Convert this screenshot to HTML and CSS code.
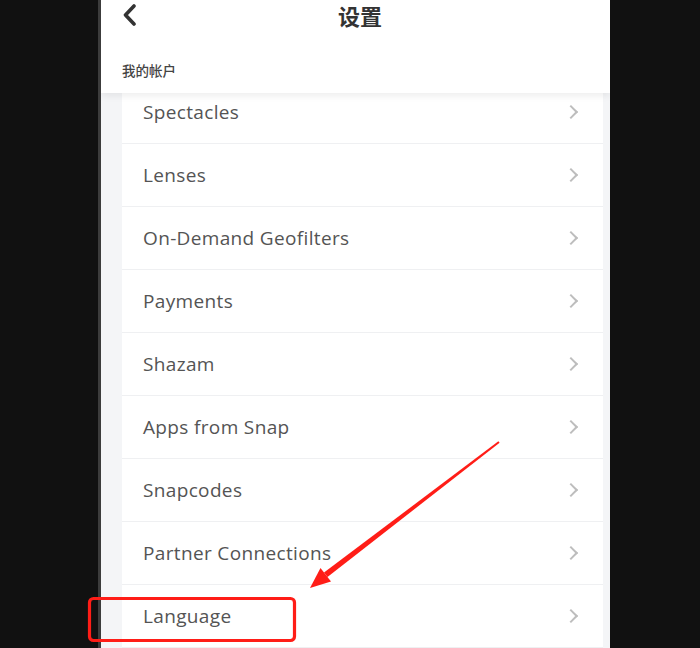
FILE: index.html
```html
<!DOCTYPE html>
<html lang="zh-CN">

<head>
    <meta charset="UTF-8">
    <meta name="viewport" content="width=device-width, initial-scale=1.0">
    <title>设置</title>
    <link rel="stylesheet" href="styles.css">
</head>

<body>
    <div class="screen">
        <div class="header">
            <div class="topbar">
                <span class="back">
                    <svg width="16" height="22" viewBox="0 0 16 22"><path d="M12 2 L3.5 11 L12 20" fill="none" stroke="#333" stroke-width="3.6" stroke-linecap="round" stroke-linejoin="round"/></svg>
                </span>
                <span class="title">设置</span>
                <span></span>
            </div>
            <div class="section">我的帐户</div>
        </div>

        <ul class="list">
            <li class="item"><span>Spectacles</span><i class="arrow"></i></li>
            <li class="item"><span>Lenses</span><i class="arrow"></i></li>
            <li class="item"><span>On-Demand Geofilters</span><i class="arrow"></i></li>
            <li class="item"><span>Payments</span><i class="arrow"></i></li>
            <li class="item"><span>Shazam</span><i class="arrow"></i></li>
            <li class="item"><span>Apps from Snap</span><i class="arrow"></i></li>
            <li class="item"><span>Snapcodes</span><i class="arrow"></i></li>
            <li class="item"><span>Partner Connections</span><i class="arrow"></i></li>
            <li class="item"><span>Language</span><i class="arrow"></i></li>
            <li class="item"><span></span><i class="arrow"></i></li>
        </ul>
    </div>

    <!-- 标注 -->
    <svg class="mark" width="700" height="648" viewBox="0 0 700 648">
        <rect x="89.5" y="598.5" width="205" height="42" rx="4" fill="none" stroke="#ff1d17" stroke-width="3.2"/>
        <polygon points="498.4,441.3 499.6,442.7 327.5,577 324,572.5" fill="#ff1d17"/>
        <polygon points="310,588 320.5,568 331,581.5" fill="#ff1d17"/>
    </svg>
</body>

</html>
```

FILE: styles.css
```css
* {
    margin: 0;
    padding: 0;
    box-sizing: border-box;
}

html,
body {
    height: 100%;
}

body {
    background-color: #111;
    overflow: hidden;
    position: relative;
    font-family: "Open Sans", "Noto Sans CJK SC", sans-serif;
}

li {
    list-style-type: none;
}

.screen {
    width: 512px;
    height: 648px;
    margin-left: 98px;
    border-left: 3px solid #3c3c3c;
    background-color: #f4f5f7;
    position: relative;
    overflow: hidden;
}

.header {
    position: absolute;
    top: 0;
    left: 0;
    right: 0;
    height: 93px;
    background-color: #fff;
    box-shadow: 0 3px 7px rgba(0, 0, 0, .07);
    z-index: 2;
}

.header .topbar {
    height: 30px;
    display: grid;
    grid-template-columns: 1fr auto 1fr;
    align-items: start;
    padding: 0 21px;
}

.header .back {
    display: flex;
    padding-top: 4px;
}

.header .title {
    padding-left: 9px;
    font-family: "Noto Sans CJK SC", sans-serif;
    font-size: 22px;
    line-height: 30px;
    font-weight: 700;
    color: #333;
}

.header .section {
    margin: 30px 0 0 21px;
    font-family: "Noto Sans CJK SC", sans-serif;
    font-size: 13.5px;
    font-weight: 500;
    color: #444;
}

.list {
    padding-top: 81px;
    margin: 0 7px 0 21px;
}

.list .item {
    height: 63px;
    display: flex;
    align-items: center;
    justify-content: space-between;
    padding: 0 27px 1px 21px;
    background-color: #fff;
    border-bottom: 1px solid #eff0f2;
    font-size: 19px;
    letter-spacing: 0.35px;
    font-weight: 500;
    color: #545454;
}

.list .item .arrow {
    width: 10px;
    height: 10px;
    border-top: 2.6px solid #bdbdbd;
    border-right: 2.6px solid #bdbdbd;
    transform: rotate(45deg);
}

.mark {
    position: absolute;
    top: 0;
    left: 0;
    pointer-events: none;
}
```
